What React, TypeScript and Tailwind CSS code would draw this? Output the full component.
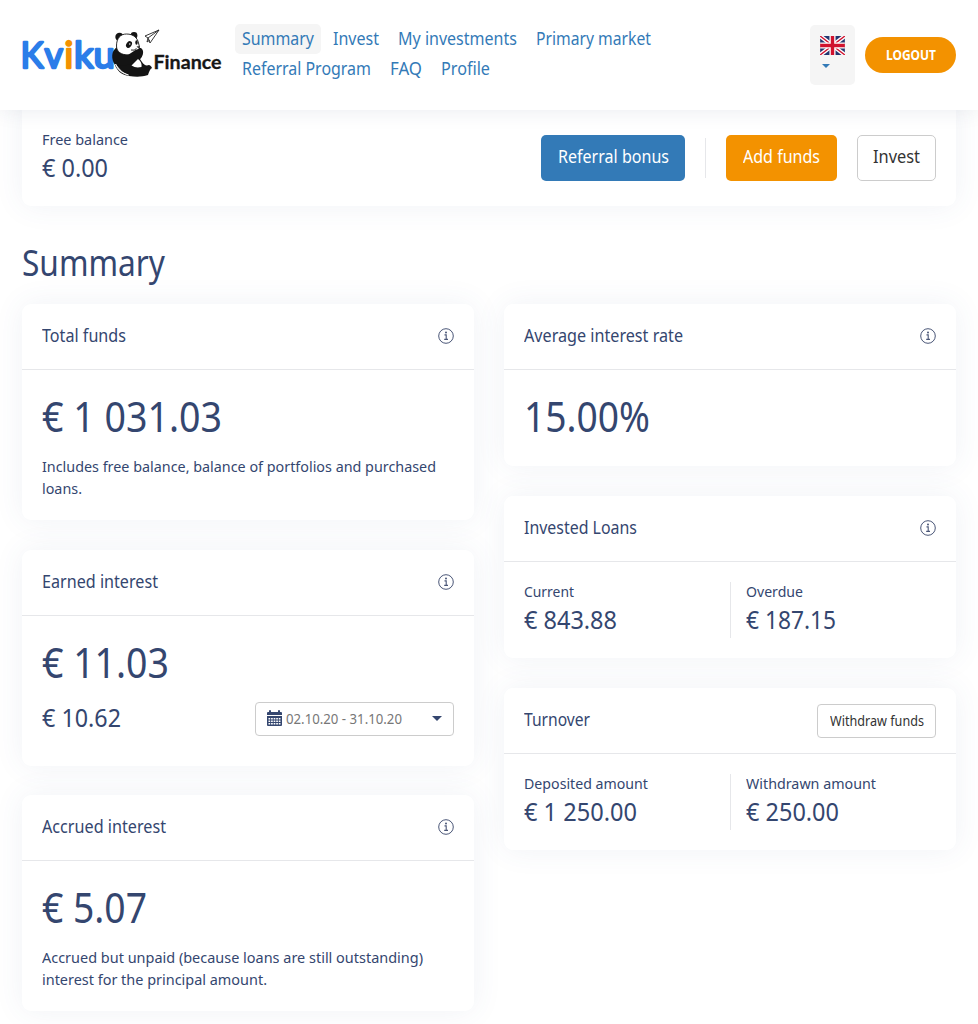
import React, { useLayoutEffect, useRef } from 'react';

type TProps = { w: number; className?: string; children: string };

// One line of text squeezed to a fixed width
const T: React.FC<TProps> = ({ w, className = '', children }) => {
  const ref = useRef<HTMLSpanElement>(null);

  useLayoutEffect(() => {
    const el = ref.current;
    if (!el) return;
    el.style.transform = 'none';
    const natural = el.getBoundingClientRect().width;
    el.style.transform = `scaleX(${w / natural})`;
  }, [w, children]);

  return (
    <span className={`block whitespace-nowrap ${className}`} style={{ width: w }}>
      <span ref={ref} className="inline-block origin-left">{children}</span>
    </span>
  );
};

const Logo = () => (
  <svg className="w-[202px] h-[52px] shrink-0" viewBox="0 0 202 52" role="img" aria-label="Kviku Finance">
    <g
      fontFamily="Lato, sans-serif"
      fontWeight="400"
      fontSize="36"
      fill="#2b7de9"
      stroke="#2b7de9"
      strokeWidth="2.3"
      strokeLinejoin="round"
      strokeLinecap="round"
    >
      <text x="-1.500" y="41" textLength="23" lengthAdjust="spacingAndGlyphs">K</text>
      <text x="22.500" y="41" textLength="18.500" lengthAdjust="spacingAndGlyphs">v</text>
      <text x="42.500" y="41" fill="#f39200" stroke="#f39200">i</text>
      <text x="52" y="41" textLength="41" lengthAdjust="spacingAndGlyphs">ku</text>
    </g>
    {/* Panda body */}
    <path d="M95 20c-6 4-6 12-2 18 2 6 7 10 14 11 7 1 13 1 19-1 1-3 2-6 4-7-1-2-1-2-3-3-3 1-5 0-7-3l-2-3c4-4 4-9 1-11z" fill="#141414" />
    {/* Ears and head */}
    <circle cx="97.500" cy="10" r="4.200" fill="#141414" />
    <circle cx="112" cy="8.500" r="3.400" fill="#141414" />
    <path d="M94.500 19c0-8 4-12 10-12 7 0 11 4 12 9l1 4c-1 5-5 8-11 8-7 0-12-3-12-9z" fill="#fff" stroke="#141414" strokeWidth="0.900" />
    <ellipse cx="107" cy="17.500" rx="2.600" ry="3.600" fill="#141414" transform="rotate(35 107 17.500)" />
    <ellipse cx="114.500" cy="15.500" rx="1.200" ry="2.200" fill="#141414" />
    <circle cx="107.800" cy="17" r="0.700" fill="#fff" />
    <path d="M114.500 19.500l2.800-.3-.8 2z" fill="#141414" />
    <path d="M109 23q3.500 1 5.500-1.500" fill="none" stroke="#141414" strokeWidth="0.900" />
    {/* Arms and belly */}
    <path d="M91 25c3-1 8 3 13 3 5 0 8-6 13-6 4 1 4 6 2 9-4 4-9 6-14 7l-8 1c-4-3-6-8-6-14z" fill="#141414" />
    <path d="M109.500 38.500l6.500-6.500c3 2 4 5 3.500 8-4 1-7 .5-10-1.500z" fill="#fff" />
    <path d="M93.500 37c2 6 6 9 13 11-6-2-9-5-13-11z" fill="#fff" stroke="#fff" strokeWidth="0.800" />
    {/* Paper plane */}
    <g fill="none" stroke="#222" strokeWidth="0.900" strokeLinejoin="round">
      <path d="M123 9l14-6-9 13-2-5z" fill="#fff" />
      <path d="M137 3l-11 8-1 4 3-2" />
    </g>
    <text
      x="131.500"
      y="42"
      fontFamily="Lato, sans-serif"
      fontWeight="700"
      fontSize="19.500"
      fill="#161616"
      stroke="#161616"
      strokeWidth="0.300"
      textLength="68"
      lengthAdjust="spacingAndGlyphs"
    >
      Finance
    </text>
  </svg>
);

const InfoIcon = () => (
  <svg className="w-4 h-4 mb-px" viewBox="0 0 16 16" fill="none" stroke="#4a5677">
    <circle cx="8" cy="8" r="7.300" strokeWidth="1" />
    <path d="M6.500 6.900h1.700v4.300M6.200 11.400h3.800" strokeWidth="1.100" />
    <circle cx="8" cy="4.500" r="1" fill="#4a5677" stroke="none" />
  </svg>
);

const CalendarIcon = () => (
  <svg className="w-[15px] h-4 mr-[4px] mb-[2px]" viewBox="0 0 15 16">
    <path d="M0 5V3q0-1 1-1h1V1q0-1 1-1t1 1v1h7V1q0-1 1-1t1 1v1h1q1 0 1 1v2z" fill="#34466f" />
    <path d="M0 6h15v9q0 1-1 1H1q-1 0-1-1z" fill="#34466f" />
    <path d="M1.500 8.700h12M1.500 11.200h12M1.500 13.700h12" stroke="#fff" strokeWidth="1.600" strokeDasharray="1.700 0.870" />
  </svg>
);

const Flag = () => (
  <svg className="w-[25px] h-[19px]" viewBox="0 0 26 20">
    <rect width="26" height="20" fill="#24366f" />
    <path d="M0 0l26 20M26 0L0 20" stroke="#fff" strokeWidth="4.200" />
    <path d="M0 0l26 20M26 0L0 20" stroke="#d0122e" strokeWidth="1.400" />
    <path d="M13 0v20M0 10h26" stroke="#fff" strokeWidth="6.400" />
    <path d="M13 0v20M0 10h26" stroke="#d0122e" strokeWidth="3.600" />
  </svg>
);

const nav = [
  [
    { label: 'Summary', w: 72, active: true },
    { label: 'Invest', w: 46 },
    { label: 'My investments', w: 119 },
    { label: 'Primary market', w: 115 },
  ],
  [
    { label: 'Referral Program', w: 129 },
    { label: 'FAQ', w: 32 },
    { label: 'Profile', w: 49 },
  ],
];

const Header = () => (
  <header className="relative z-10 h-[110px] shrink-0 flex items-start bg-white px-[22px] shadow-[0_0_20px_rgba(40,55,90,0.1)]">
    <div className="pt-[27px] w-[213px]"><Logo /></div>
    <nav className="flex-1 pt-6">
      {nav.map((row, i) => (
        <div key={i} className="flex gap-[5px]">
          {row.map((item) => (
            <a
              key={item.label}
              className={`h-[30px] rounded-[5px] px-[7px] text-[18px] leading-[29px] text-[#337ab7] ${item.active ? 'bg-[#f5f5f5]' : ''}`}
            >
              <T w={item.w}>{item.label}</T>
            </a>
          ))}
        </div>
      ))}
    </nav>
    <div className="mt-[25px] mr-[10px] w-[45px] h-[60px] rounded-[5px] bg-[#f5f5f5] pt-[11px] pl-[10px]">
      <Flag />
      <svg className="mt-[9px] ml-[2px] w-[8px] h-[4px]" viewBox="0 0 8 4"><path d="M0 0h8L4 4z" fill="#337ab7" /></svg>
    </div>
    <button className="mt-[37px] w-[91px] h-[36px] rounded-full bg-[#f39200] text-white font-bold text-[14px] leading-[36px] flex justify-center">
      <T w={50}>LOGOUT</T>
    </button>
  </header>
);

const card = 'bg-white rounded-[9px] shadow-[0_0_30px_rgba(60,85,140,0.08)]';

type CardProps = { title: string; w: number; action?: React.ReactNode; children: React.ReactNode };

const Card: React.FC<CardProps> = ({ title, w, action, children }) => (
  <section className={card}>
    <div className="h-[66px] border-b border-[#e6e7ea] px-5 flex items-center justify-between">
      <T w={w} className="text-[18px] leading-6 pb-[3px]">{title}</T>
      {action ?? <InfoIcon />}
    </div>
    <div className="p-5">{children}</div>
  </section>
);

const Amount: React.FC<{ w: number; children: string }> = ({ w, children }) => (
  <T w={w} className="text-[41px] leading-[52px] h-14">{children}</T>
);

const Stat: React.FC<{ label: string; lw: number; value: string; vw: number }> = ({ label, lw, value, vw }) => (
  <div>
    <T w={lw} className="text-[15px] leading-[19px] h-[22px]">{label}</T>
    <T w={vw} className="text-[25px] leading-[31px] h-[34px]">{value}</T>
  </div>
);

const Stats: React.FC<{ children: [React.ReactNode, React.ReactNode] }> = ({ children }) => (
  <div className="flex h-14">
    <div className="w-[207px] border-r border-[#e6e7ea]">{children[0]}</div>
    <div className="pl-[15px]">{children[1]}</div>
  </div>
);

export default function App() {
  return (
    <div className="h-screen overflow-hidden flex flex-col bg-white text-[#34466f] font-['Noto_Sans',sans-serif]">
      <Header />
      <main className="px-[22px]">
        <div className={`${card} -mt-3 h-[108px] pt-[32px] px-5 flex justify-between`}>
          <Stat label="Free balance" lw={86} value="€ 0.00" vw={66} />
          <div className="flex mt-[5px] text-[18px] leading-[43px]">
            <button className="h-[46px] w-[144px] rounded-[5px] bg-[#337ab7] text-white flex justify-center"><T w={111}>Referral bonus</T></button>
            <div className="w-px h-10 mt-[3px] mx-5 bg-[#e6e7ea]" />
            <button className="h-[46px] w-[111px] rounded-[5px] bg-[#f39200] text-white flex justify-center"><T w={77}>Add funds</T></button>
            <button className="h-[46px] w-[79px] ml-5 rounded-[5px] border border-[#ccc] text-[#333] leading-[41px] flex justify-center"><T w={47}>Invest</T></button>
          </div>
        </div>

        <h1 className="mt-[33px] h-[65px] text-[36px] leading-[48px]"><T w={143}>Summary</T></h1>

        <div className="grid grid-cols-2 gap-[30px] items-start">
          <div className="flex flex-col gap-[29.5px]">
            <Card title="Total funds" w={84}>
              <Amount w={180}>€ 1 031.03</Amount>
              <div className="mt-[9px] mb-px text-[15px] leading-[22px]">
                <T w={394}>Includes free balance, balance of portfolios and purchased</T>
                <T w={40}>loans.</T>
              </div>
            </Card>
            <Card title="Earned interest" w={116}>
              <Amount w={127}>€ 11.03</Amount>
              <div className="mt-[10px] mb-[10px] flex justify-between">
                <T w={79} className="text-[25px] leading-[31px]">€ 10.62</T>
                <button className="w-[199px] h-[34px] border border-[#ccc] rounded-[4px] px-[11px] flex items-center">
                  <CalendarIcon />
                  <T w={116} className="text-[14px] leading-8 text-[#777]">02.10.20 - 31.10.20</T>
                  <svg className="ml-auto w-[10px] h-[5px] mb-px" viewBox="0 0 10 5"><path d="M0 0h10L5 5z" fill="#34466f" /></svg>
                </button>
              </div>
            </Card>
            <Card title="Accrued interest" w={124}>
              <Amount w={105}>€ 5.07</Amount>
              <div className="mt-[9px] mb-px text-[15px] leading-[22px]">
                <T w={381}>Accrued but unpaid (because loans are still outstanding)</T>
                <T w={225}>interest for the principal amount.</T>
              </div>
            </Card>
          </div>

          <div className="flex flex-col gap-[30px]">
            <Card title="Average interest rate" w={159}>
              <Amount w={126}>15.00%</Amount>
            </Card>
            <Card title="Invested Loans" w={113}>
              <Stats>
                <Stat label="Current" lw={50} value="€ 843.88" vw={93} />
                <Stat label="Overdue" lw={57} value="€ 187.15" vw={90} />
              </Stats>
            </Card>
            <Card
              title="Turnover"
              w={66}
              action={
                <button className="w-[119px] h-[34px] border border-[#ccc] rounded-[4px] text-[#333] text-[14px] leading-[31px] flex justify-center">
                  <T w={94}>Withdraw funds</T>
                </button>
              }
            >
              <Stats>
                <Stat label="Deposited amount" lw={124} value="€ 1 250.00" vw={113} />
                <Stat label="Withdrawn amount" lw={130} value="€ 250.00" vw={93} />
              </Stats>
            </Card>
          </div>
        </div>
      </main>
    </div>
  );
}
